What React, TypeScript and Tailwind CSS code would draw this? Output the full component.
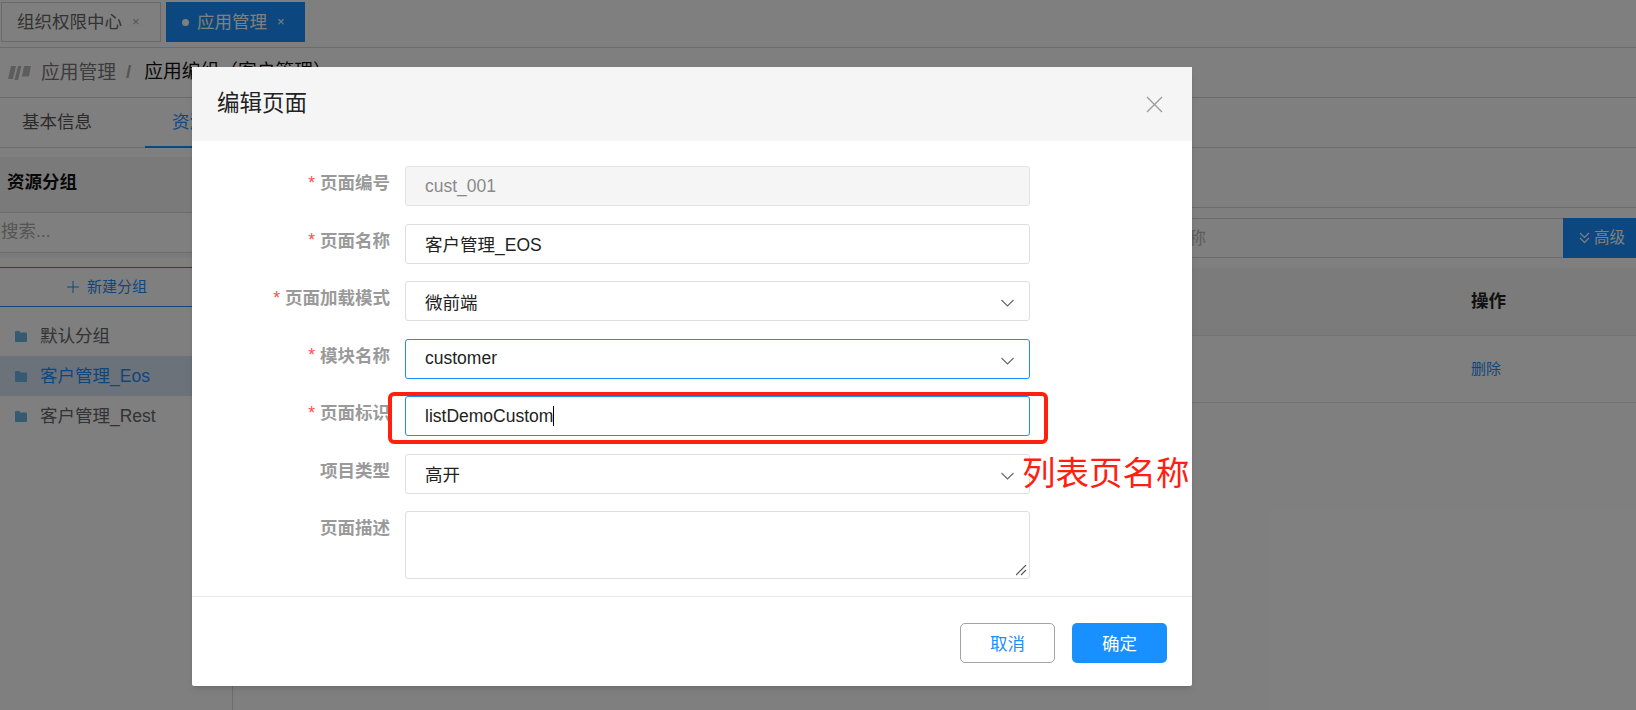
import React from "react";

const font = { fontFamily: '"Liberation Sans","Noto Sans CJK SC",sans-serif' };

function Chevron() {
  return (
    <svg width="13" height="8" viewBox="0 0 13 8" fill="none" stroke="#666" strokeWidth="1.1" className="absolute right-[15px] top-1/2 -translate-y-[2px]">
      <path d="M.5 1l6 6 6-6" />
    </svg>
  );
}

function Folder() {
  return (
    <svg width="12" height="11" viewBox="0 0 12 11" className="shrink-0">
      <path d="M0 1.2C0 .5.5 0 1.2 0h3l1.3 1.5h5.3c.7 0 1.2.5 1.2 1.2v7c0 .7-.5 1.3-1.2 1.3H1.2C.5 11 0 10.4 0 9.7z" fill="#6fb5e6" />
    </svg>
  );
}

function Row({ label, required = true, children }: { label: string; required?: boolean; children: React.ReactNode }) {
  return (
    <div className="flex items-start">
      <div className="w-[198px] shrink-0 flex justify-end items-center h-[35px] text-[17.5px] font-bold text-[#9a9a9a] whitespace-nowrap">
        {required && <span className="text-[#ff4d4f] font-normal mr-[5px] leading-none">*</span>}
        {label}
      </div>
      <div className="ml-[15px] w-[625px]">{children}</div>
    </div>
  );
}

function Field({ value, focus, select, disabled, cjk }: { value: string; focus?: boolean; select?: boolean; disabled?: boolean; cjk?: boolean }) {
  const base = "relative h-10 rounded-[3px] border px-[19px] flex items-center text-[17.5px] whitespace-nowrap ";
  const tone = disabled
    ? "border-[#e3e3e3] bg-[#f5f5f5] text-[#8a8a8a]"
    : focus
    ? "border-[#1890ff] bg-white text-[#222]"
    : "border-[#dedede] bg-white text-[#222]";
  return (
    <div className={base + tone}>
      <span className={cjk ? "translate-y-[2px]" : ""}>{value}</span>
      {select && <Chevron />}
    </div>
  );
}

export default function App() {
  return (
    <div className="relative h-screen w-full overflow-hidden bg-white" style={font}>
      {/* top tab bar */}
      <div className="h-12 border-b border-[#d9d9d9] flex items-start pt-[2px] pl-[1px] gap-[5px] text-[17.5px]">
        <div className="h-10 w-[160px] border border-[#d4d4d4] flex items-center pl-[15px] text-[#666]">
          组织权限中心
          <span className="ml-[10px] text-[13px] text-[#aaa]">×</span>
        </div>
        <div className="h-10 w-[139px] bg-[#1890ff] flex items-center pl-[16px] text-white">
          <span className="w-[7px] h-[7px] rounded-full bg-white mr-[8px]" />
          应用管理
          <span className="ml-[10px] text-[13px]">×</span>
        </div>
      </div>
      {/* breadcrumb */}
      <div className="h-[50px] border-b border-[#d9d9d9] flex items-center pl-[8px] text-[18.75px]">
        <svg width="23" height="16" viewBox="0 0 23 16" fill="#bbb">
          <path d="M3 1h5L5 14H0zM10 1h3.5L10 15H6.5zM16 1h7l-2 10.500h-7z" />
        </svg>
        <span className="ml-[10px] text-[#777] translate-y-[1px]">应用管理</span>
        <span className="ml-[10px] text-[#aaa] font-bold">/</span>
        <span className="ml-[13px] text-[#111]">应用编组（客户管理）</span>
      </div>
      {/* tabs */}
      <div className="h-[50px] border-b border-[#d9d9d9] flex items-stretch text-[17.5px]">
        <div className="w-[145px] pl-[22px] flex items-center text-[#555]">基本信息</div>
        <div className="w-[120px] pl-[27px] flex items-center text-[#1890ff] border-b-2 border-[#1890ff] -mb-px">资源管理</div>
      </div>
      {/* content */}
      <div className="flex h-[563px]">
        <aside className="w-[233px] shrink-0 border-r border-[#d9d9d9] pt-[9px]">
          <div className="h-[56px] pb-[4px] bg-[#f5f5f5] border-b border-[#d9d9d9] flex items-center pl-[7px] text-[17.5px] font-bold text-[#111]">资源分组</div>
          <div className="h-[40px] pb-[2px] border-b border-[#d9d9d9] flex items-center pl-[1px] text-[17.5px] text-[#aaa]">搜索...</div>
          <div className="h-[5px] bg-[#f5f5f5]" />
          <div className="mt-[9px] h-[40px] border-y border-[#1890ff] flex items-center pl-[67px] gap-[8px] text-[15px] text-[#1890ff]">
            <svg width="12" height="12" viewBox="0 0 12 12" stroke="#1890ff" strokeWidth="1"><path d="M6 0v12M0 6h12" /></svg>
            新建分组
          </div>
          <div className="mt-[9px] text-[17.5px]">
            <div className="h-[40px] flex items-center pl-[15px] gap-[13px] text-[#666]"><Folder />默认分组</div>
            <div className="h-[40px] flex items-center pl-[15px] gap-[13px] text-[#1890ff] bg-[#d8e4f2]"><Folder />客户管理_Eos</div>
            <div className="h-[40px] flex items-center pl-[15px] gap-[13px] text-[#666]"><Folder />客户管理_Rest</div>
          </div>
        </aside>
        <main className="flex-1 min-w-0">
          <div className="h-[60px] border-b border-[#d9d9d9]" />
          <div className="mt-[10px] flex h-10 pl-[15px]">
            <div className="flex-1 border-y border-[#d9d9d9] flex items-center justify-end pr-[357px] text-[17.5px] text-[#bbb]">请输入页面名称</div>
            <div className="w-[73px] bg-[#1890ff] text-white flex items-center pl-[16px] gap-[4px] text-[15.5px]">
              <svg width="11" height="14" viewBox="0 0 11 14" fill="none" stroke="#fff" strokeWidth="1.2"><path d="M1 2l4.500 4.500L10 2M1 7l4.500 4.500L10 7" /></svg>
              高级
            </div>
          </div>
          <div className="mt-[10px] pl-[15px]">
            <div className="h-[68px] bg-[#f7f7f7] border-b border-[#e5e5e5] flex items-center pl-[1223px] text-[17.5px] font-bold text-[#222]">操作</div>
            <div className="h-[67px] border-b border-[#e5e5e5] flex items-center pl-[1223px] text-[15px] text-[#1890ff]">删除</div>
          </div>
        </main>
      </div>

      {/* scrim */}
      <div className="absolute inset-0 bg-black/50" />

      {/* modal */}
      <div className="absolute left-[192px] top-[67px] w-[1000px] h-[619px] bg-white rounded-[2px] shadow-md flex flex-col">
        <div className="h-[74px] shrink-0 bg-[#f5f5f5] flex items-center justify-between pl-[25px] pr-[29px]">
          <span className="text-[22.5px] text-[#222]">编辑页面</span>
          <svg width="17" height="17" viewBox="0 0 17 17" stroke="#999" strokeWidth="1.3"><path d="M1 1l15 15M16 1L1 16" /></svg>
        </div>
        <div className="flex-1 pt-[25px] flex flex-col gap-[17.5px]">
          <Row label="页面编号"><Field value="cust_001" disabled /></Row>
          <Row label="页面名称"><Field value="客户管理_EOS" cjk /></Row>
          <Row label="页面加载模式"><Field value="微前端" select cjk /></Row>
          <Row label="模块名称"><Field value="customer" select focus /></Row>
          <Row label="页面标识">
            <div className="relative">
              <Field value="listDemoCustom" focus />
              <span className="absolute left-[148px] top-[10px] w-px h-[20px] bg-black" />
            </div>
          </Row>
          <Row label="项目类型" required={false}><Field value="高开" select cjk /></Row>
          <Row label="页面描述" required={false}>
            <div className="relative">
              <textarea className="block w-full h-[68px] rounded-[3px] border border-[#dedede] outline-none resize-none" />
              <svg width="11" height="11" viewBox="0 0 11 11" stroke="#555" strokeWidth="1.1" className="absolute right-[3px] bottom-[3px]">
                <path d="M0 10L10 0M5 10l5-5" />
              </svg>
            </div>
          </Row>
        </div>
        <div className="h-[90px] shrink-0 border-t border-[#e8e8e8] flex justify-end items-start pt-[26px] pr-[25px] gap-[17px] text-[17.5px]">
          <div className="w-[95px] h-10 pt-[2px] rounded-[5px] border border-[#a3a3a3] text-[#1890ff] flex items-center justify-center">取消</div>
          <div className="w-[95px] h-10 pt-[2px] rounded-[5px] bg-[#1890ff] text-white flex items-center justify-center">确定</div>
        </div>
      </div>

      {/* annotation */}
      <div className="absolute left-[388px] top-[392px] w-[660px] h-[52px] rounded-[6px] border-[4px] border-[#ff2010]" />
      <div className="absolute left-[1022px] top-[453px] text-[33.5px] leading-[42px] text-[#ff2010] whitespace-nowrap">列表页名称</div>
    </div>
  );
}
